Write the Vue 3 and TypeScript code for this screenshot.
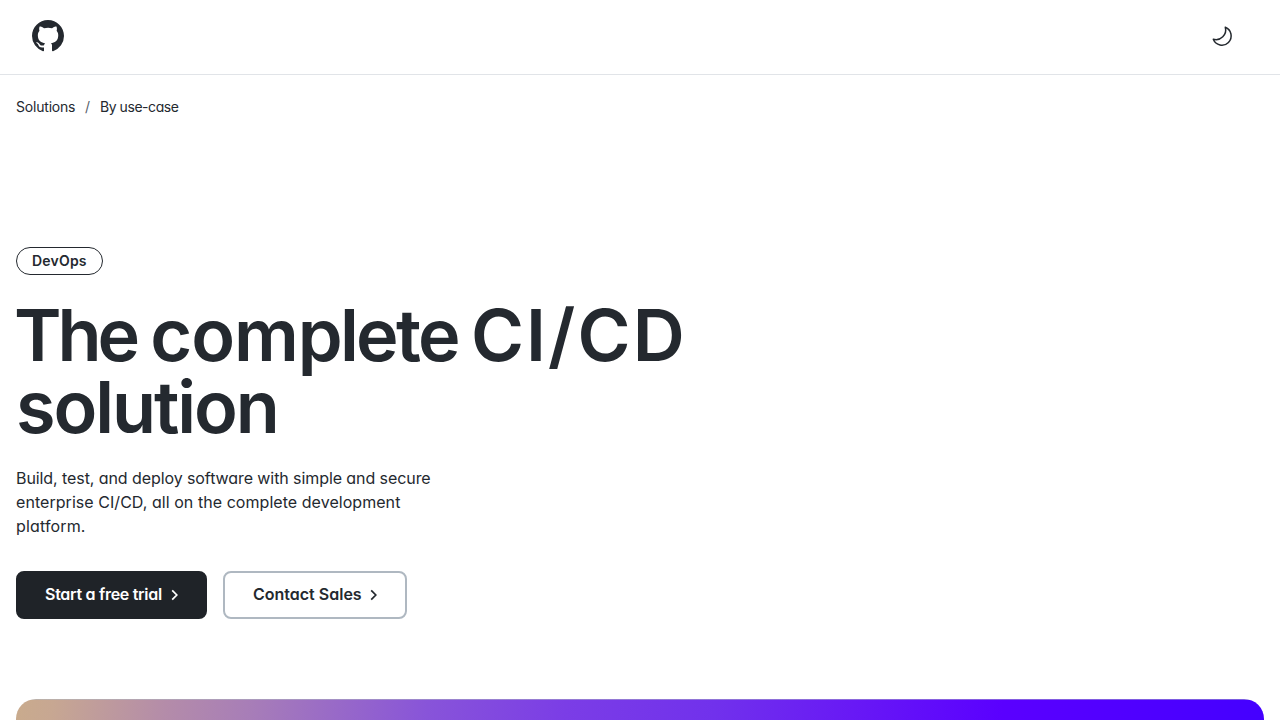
<script setup lang="ts">
interface Crumb {
  label: string
  tone: string
}

const crumbs: Crumb[] = [
  { label: 'Solutions', tone: 'first' },
  { label: 'By use-case', tone: 'second' },
]
</script>

<template>
  <div class="page">
    <header class="header">
      <a class="logo" aria-label="GitHub">
        <svg viewBox="0 0 16 16" width="32" height="32" fill="currentColor">
          <path
            d="M8 0c4.42 0 8 3.58 8 8a8.013 8.013 0 0 1-5.45 7.59c-.4.08-.55-.17-.55-.38 0-.27.01-1.13.01-2.2 0-.75-.25-1.23-.54-1.48 1.78-.2 3.65-.88 3.65-3.95 0-.88-.31-1.59-.82-2.15.08-.2.36-1.02-.08-2.12 0 0-.67-.22-2.2.82-.64-.18-1.32-.27-2-.27-.68 0-1.36.09-2 .27-1.53-1.03-2.2-.82-2.2-.82-.44 1.1-.16 1.92-.08 2.12-.51.56-.82 1.28-.82 2.15 0 3.06 1.86 3.75 3.64 3.95-.23.2-.44.55-.51 1.07-.46.21-1.61.55-2.33-.66-.15-.24-.6-.83-1.23-.82-.67.01-.27.38.01.53.34.19.73.9.82 1.13.16.45.68 1.31 2.69.94 0 .67.01 1.3.01 1.49 0 .21-.15.45-.55.38A7.995 7.995 0 0 1 0 8c0-4.42 3.58-8 8-8Z"
          />
        </svg>
      </a>
      <button class="theme" type="button" aria-label="Toggle color mode">
        <svg viewBox="0 0 24 24" width="24" height="24" fill="none" stroke="currentColor" stroke-width="1.5" stroke-linejoin="round">
          <path d="M15.3 3.3A9.25 9.25 0 1 1 3.3 15.3 9.75 9.75 0 0 0 15.3 3.3Z" />
        </svg>
      </button>
    </header>

    <nav class="crumbs">
      <template v-for="(crumb, i) in crumbs" :key="crumb.label">
        <span v-if="i > 0" class="slash">/</span>
        <a :class="crumb.tone">{{ crumb.label }}</a>
      </template>
    </nav>

    <main class="hero">
      <span class="pill">DevOps</span>
      <h1 class="title">
        <span class="w-the">The</span> <span class="w-complete"><span class="wide">com</span>plete</span> <span class="w-cicd">CI/CD</span><br />
        <span class="w-solution">solution</span>
      </h1>
      <p class="lead">
        <span class="l1">Build, test, and deploy software with simple and secure</span>
        <span class="l2">enterprise CI/CD, all on the complete development</span>
        <span class="l3">platform.</span>
      </p>
      <div class="actions">
        <a class="btn primary">
          <span>Start a free trial</span>
          <svg viewBox="0 0 8 12" width="8" height="12"><path d="M1.2 1.3 5.8 6 1.2 10.7" /></svg>
        </a>
        <a class="btn secondary">
          <span>Contact Sales</span>
          <svg viewBox="0 0 8 12" width="8" height="12"><path d="M1.2 1.3 5.8 6 1.2 10.7" /></svg>
        </a>
      </div>
    </main>

    <div class="banner"></div>
  </div>
</template>

<style>
body {
  background: #fff;
}
</style>

<style scoped>
.page {
  box-sizing: border-box;
  height: 720px;
  overflow: hidden;
  display: flex;
  flex-direction: column;
  color: #24292f;
  background: #fff;
  font-family: Inter, 'Liberation Sans', sans-serif;
  font-feature-settings: 'cv11';
}

.header {
  box-sizing: border-box;
  height: 75px;
  flex: none;
  display: flex;
  justify-content: space-between;
  align-items: flex-start;
  padding: 20px 46px 0 32px;
  border-bottom: 1px solid #e1e4e8;
}

.logo,
.theme svg,
.logo svg {
  display: block;
}

.theme {
  margin: 4px 0 0;
  padding: 0;
  border: 0;
  background: none;
  color: inherit;
}

.crumbs {
  display: flex;
  flex: none;
  height: 20px;
  padding: 22px 16px 0;
  font-size: 14px;
  line-height: 20px;
}

.first {
  width: 59px;
  letter-spacing: -0.2px;
}

.slash {
  width: 5px;
  margin: 0 10px;
  color: #57606a;
}

.second {
  letter-spacing: -0.45px;
}

.hero {
  box-sizing: border-box;
  flex: none;
  height: 582px;
  padding: 130px 16px 0;
  display: flex;
  flex-direction: column;
  align-items: flex-start;
}

.pill {
  box-sizing: border-box;
  width: 87px;
  height: 28px;
  padding-left: 15px;
  border: 1px solid #24292f;
  border-radius: 14px;
  font-size: 14px;
  font-weight: 600;
  line-height: 26px;
  letter-spacing: 0.2px;
}

.title {
  margin: 24px 0 0;
  font-size: 72px;
  line-height: 72px;
  font-weight: 600;
  white-space: nowrap;
}

.w-the {
  margin-left: -2px;
  letter-spacing: -4px;
}

.w-complete {
  margin-left: -4px;
  letter-spacing: -2.7px;
}

.wide {
  letter-spacing: -1.1px;
}

.w-cicd {
  margin-left: -5px;
  letter-spacing: 2.1px;
}

.w-solution {
  letter-spacing: -2.1px;
}

.lead {
  margin: 23px 0 0;
  font-size: 16px;
  line-height: 24px;
  white-space: nowrap;
}

.lead span {
  display: block;
}

.l1 {
  letter-spacing: -0.08px;
}

.l2 {
  letter-spacing: 0.05px;
}

.l3 {
  letter-spacing: 0.15px;
}

.actions {
  display: flex;
  gap: 16px;
  margin-top: 33px;
}

.btn {
  box-sizing: border-box;
  height: 48px;
  display: flex;
  align-items: center;
  justify-content: space-between;
  border: 2px solid;
  border-radius: 8px;
  padding: 0 26px 2px 27px;
  font-size: 16px;
  font-weight: 600;
  white-space: nowrap;
}

.btn svg {
  margin-top: 2px;
  fill: none;
  stroke: currentColor;
  stroke-width: 1.7;
}

.primary {
  width: 191px;
  color: #fff;
  background: #1f2328;
  border-color: #1f2328;
  letter-spacing: -0.28px;
}

.secondary {
  width: 184px;
  padding: 0 27px 2px 28px;
  border-color: #afb8c1;
  letter-spacing: 0;
}

.banner {
  flex: none;
  height: 21px;
  margin: 0 16px;
  border-radius: 20px 20px 0 0;
  background:
    linear-gradient(rgba(175, 184, 193, 0.5), rgba(175, 184, 193, 0.5)) top / 100% 1px no-repeat,
    linear-gradient(
      97deg,
      #c9ab8d 0%,
      #c7a792 3%,
      #b48ca9 12%,
      #a77db8 19%,
      #8854d9 33%,
      #7b3de6 44%,
      #7131ec 56%,
      #6819f5 67%,
      #5a00ff 79%,
      #4f00ff 90%,
      #4400ff 100%
    );
}
</style>
